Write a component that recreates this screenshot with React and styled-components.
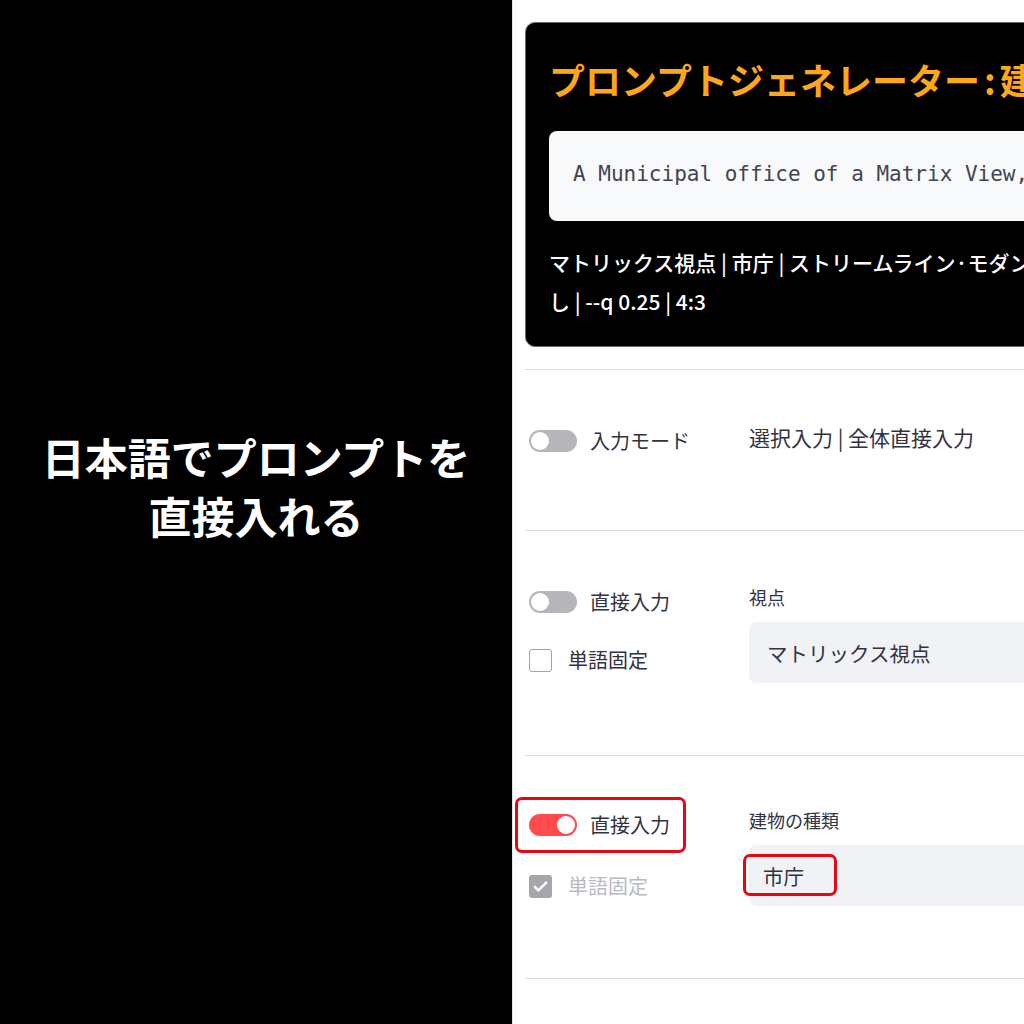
import React from "react";
import styled, { createGlobalStyle, css } from "styled-components";

const Global = createGlobalStyle`
  html, body { margin: 0; padding: 0; background: #fff; }
  body {
    width: 1024px;
    height: 1024px;
    overflow: hidden;
    font-family: "Noto Sans CJK JP", "Noto Sans", sans-serif;
    color: #31333f;
  }
  * { box-sizing: border-box; }
`;

const Page = styled.div`
  display: flex;
  width: 1024px;
  height: 1024px;
`;

const Banner = styled.div`
  width: 512px;
  flex: none;
  background: #000;
  display: flex;
  align-items: center;
  justify-content: center;
  padding-bottom: 52px;
`;

const BannerText = styled.h1`
  margin: 0;
  color: #fff;
  font-size: 43px;
  line-height: 59px;
  font-weight: 700;
  text-align: center;
`;

const Screen = styled.div`
  width: 512px;
  flex: none;
  background: #fff;
  overflow: hidden;
  border-left: 1px solid #e2e2e2;
  padding: 22px 0 0 12px;
`;

const Content = styled.div`
  width: 780px;
`;

const OutputCard = styled.section`
  background: #000;
  border: 1px solid #6b6b6b;
  border-radius: 10px;
  padding: 35px 0 25px 23px;
  white-space: nowrap;
`;

const Title = styled.h2`
  margin: 0;
  color: #ffa61a;
  font-size: 36px;
  line-height: 43px;
  font-weight: 700;
`;

const TitleColon = styled.span`
  padding: 0 4px;
`;

const CodeBox = styled.div`
  margin-top: 30px;
  height: 90px;
  background: #f8f9fb;
  border-radius: 8px;
  display: flex;
  align-items: center;
  padding: 0 24px 5px;
  font-family: "DejaVu Sans Mono", "Liberation Mono", monospace;
  font-size: 21px;
  color: #44444c;
  white-space: pre;
`;

const Caption = styled.p`
  margin: 22px 0 0;
  color: #fff;
  font-size: 21px;
  line-height: 39px;
  font-weight: 500;
`;

const Divider = styled.hr`
  margin: 0;
  border: none;
  height: 1px;
  background: #dddddd;
`;

const FirstDivider = styled(Divider)`
  margin-top: 22px;
`;

const Section = styled.div`
  display: grid;
  grid-template-columns: 224px 1fr;
  align-items: start;
  padding-top: ${(p) => p.$top}px;
  padding-bottom: ${(p) => p.$bottom}px;
`;

const LeftCol = styled.div`
  display: flex;
  flex-direction: column;
  gap: ${(p) => p.$gap || 0}px;
  padding-left: 4px;
  margin-top: 2px;
`;

const RightCol = styled.div`
  display: flex;
  flex-direction: column;
`;

const ControlRow = styled.div`
  position: relative;
  display: flex;
  align-items: center;
  height: 30px;
  gap: ${(p) => p.$gap}px;
  align-self: flex-start;
  ${(p) =>
    p.$marked &&
    css`
      &::before {
        content: "";
        position: absolute;
        left: -14px;
        right: -16px;
        top: -13px;
        bottom: -13px;
        border: 3px solid #e8070f;
        border-radius: 7px;
        pointer-events: none;
      }
    `}
`;

const Toggle = styled.span`
  position: relative;
  flex: none;
  width: 48px;
  height: 22px;
  border-radius: 11px;
  background: ${(p) => (p.$on ? "#ff4b4b" : "#b4b6bb")};
  &::after {
    content: "";
    position: absolute;
    top: 2px;
    left: ${(p) => (p.$on ? "28px" : "2px")};
    width: 18px;
    height: 18px;
    border-radius: 50%;
    background: #fff;
  }
`;

const CheckBox = styled.span`
  flex: none;
  width: 23px;
  height: 23px;
  border-radius: 3px;
  display: flex;
  align-items: center;
  justify-content: center;
  ${(p) =>
    p.$checked
      ? css`
          background: #a5a7ac;
        `
      : css`
          background: #fff;
          border: 1.5px solid #a3a3a3;
        `}
`;

const ControlLabel = styled.span`
  font-size: 20px;
  line-height: 30px;
  color: ${(p) => (p.$disabled ? "#b9bbbf" : "#31333f")};
`;

const Value = styled.div`
  font-size: 21px;
  line-height: 30px;
  color: #31333f;
  margin-top: -2px;
`;

const FieldLabel = styled.div`
  font-size: 18px;
  line-height: 24px;
  color: #31333f;
`;

const Field = styled.div`
  margin-top: 13px;
  height: 61px;
  border-radius: 8px;
  background: #f0f2f6;
  display: flex;
  align-items: center;
  padding-left: ${(p) => p.$pad}px;
  font-size: 20.5px;
  color: #31333f;
`;

const MarkedText = styled.span`
  position: relative;
  display: inline-block;
  line-height: 28px;
  &::before {
    content: "";
    position: absolute;
    left: -20px;
    right: -33px;
    top: -8px;
    bottom: -6px;
    border: 3px solid #e8070f;
    border-radius: 7px;
  }
`;

const Check = () => (
  <svg width="17" height="17" viewBox="0 0 24 24" fill="none" stroke="#fff" strokeWidth="3.4" strokeLinecap="round" strokeLinejoin="round">
    <path d="M4 12.5l5 5L20 6.5" />
  </svg>
);

export default function App() {
  return (
    <>
      <Global />
      <Page>
        <Banner>
          <BannerText>
            日本語でプロンプトを
            <br />
            直接入れる
          </BannerText>
        </Banner>
        <Screen>
          <Content>
            <OutputCard>
              <Title>
                プロンプトジェネレーター<TitleColon>:</TitleColon>建物
              </Title>
              <CodeBox>A Municipal office of a Matrix View, Streamline Moderne</CodeBox>
              <Caption>
                マトリックス視点 | 市庁 | ストリームライン·モダン | 昼 | 晴れ | 人物な
                <br />
                し | --q 0.25 | 4:3
              </Caption>
            </OutputCard>
            <FirstDivider />

            <Section $top={54} $bottom={74}>
              <LeftCol>
                <ControlRow $gap={13}>
                  <Toggle />
                  <ControlLabel>入力モード</ControlLabel>
                </ControlRow>
              </LeftCol>
              <RightCol>
                <Value>選択入力 | 全体直接入力</Value>
              </RightCol>
            </Section>
            <Divider />

            <Section $top={54} $bottom={72}>
              <LeftCol $gap={28}>
                <ControlRow $gap={13}>
                  <Toggle />
                  <ControlLabel>直接入力</ControlLabel>
                </ControlRow>
                <ControlRow $gap={16}>
                  <CheckBox />
                  <ControlLabel>単語固定</ControlLabel>
                </ControlRow>
              </LeftCol>
              <RightCol>
                <FieldLabel>視点</FieldLabel>
                <Field $pad={18}>マトリックス視点</Field>
              </RightCol>
            </Section>
            <Divider />

            <Section $top={52} $bottom={72}>
              <LeftCol $gap={31}>
                <ControlRow $gap={13} $marked>
                  <Toggle $on />
                  <ControlLabel>直接入力</ControlLabel>
                </ControlRow>
                <ControlRow $gap={16}>
                  <CheckBox $checked>
                    <Check />
                  </CheckBox>
                  <ControlLabel $disabled>単語固定</ControlLabel>
                </ControlRow>
              </LeftCol>
              <RightCol>
                <FieldLabel>建物の種類</FieldLabel>
                <Field $pad={14}>
                  <MarkedText>市庁</MarkedText>
                </Field>
              </RightCol>
            </Section>
            <Divider />
          </Content>
        </Screen>
      </Page>
    </>
  );
}
